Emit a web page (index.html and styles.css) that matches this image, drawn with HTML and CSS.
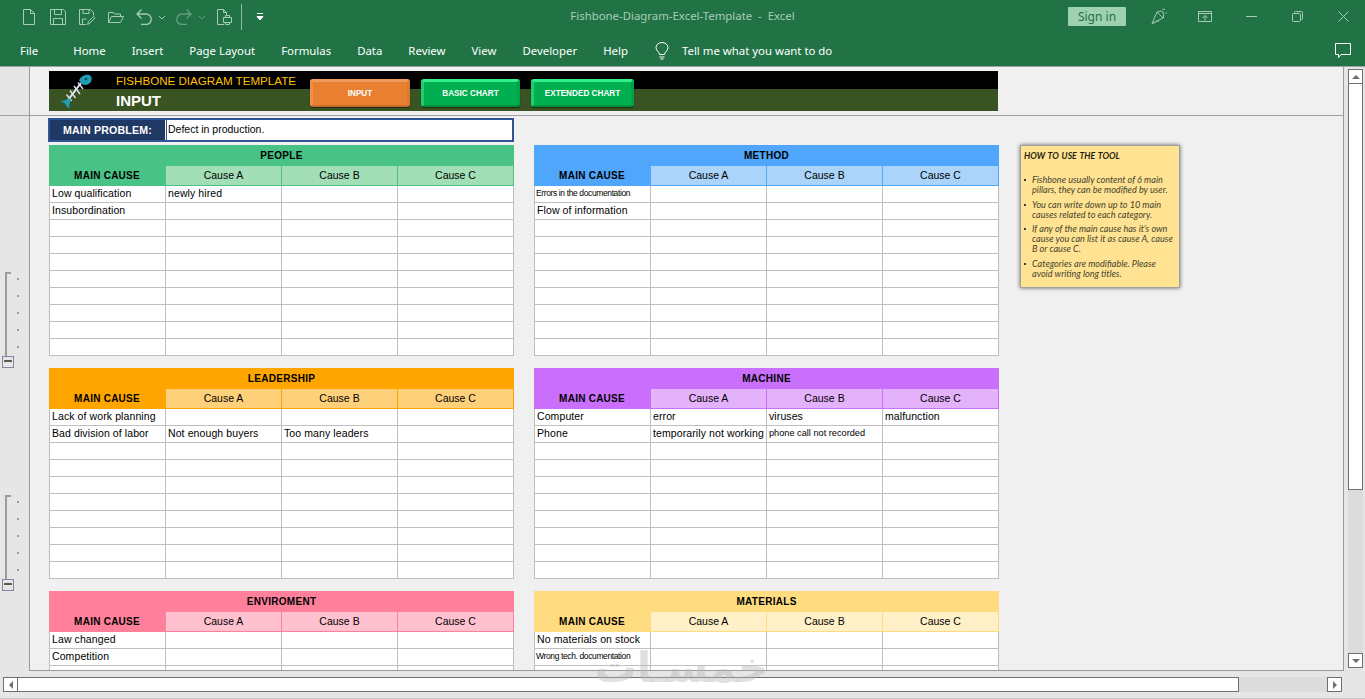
FILE: index.html
```html
<!DOCTYPE html>
<html lang="en">
<head>
<meta charset="utf-8">
<title>Fishbone-Diagram-Excel-Template - Excel</title>
<link rel="stylesheet" href="styles.css">
</head>
<body>
<div class="app">
  <header class="titlebar">
    <div class="qat">
      <svg class="qi" viewBox="0 0 16 16"><path d="M2.500.5h7l4 4v11h-11zM9.500.5v4h4"/></svg>
      <svg class="qi" viewBox="0 0 16 16"><path d="M.5.5h13l2 2v13H.5zM4.500.5v5h7v-5M3.500 15.500v-6h9v6"/></svg>
      <svg class="qi" viewBox="0 0 16 16"><path d="M7 15.500H.5V.5h11l3 3v3M4 .5v4h6v-4M3.500 15v-5h4M8.500 15.500l1-3 5-5 1.500 1.500-5 5z"/></svg>
      <svg class="qi" viewBox="0 0 16 16"><path d="M.5 13.500v-10h5l1 1.500h6v2M.5 13.500l3-6h12l-3 6z"/></svg>
      <svg class="qg" viewBox="0 0 34 16"><path d="M7.500.5 3 5l4.500 4.500M3 5h9a5.200 5.200 0 0 1 0 10.500H7"/><path class="caret" d="M25 7l3 3 3-3"/></svg>
      <svg class="qg qg-dim" viewBox="0 0 34 16"><path d="M13.500.5 18 5l-4.500 4.500M18 5H9a5.200 5.200 0 0 0 0 10.500h5"/><path class="caret" d="M26 7l3 3 3-3"/></svg>
      <svg class="qi qi-print" viewBox="0 0 16 16"><path d="M8 15.500H1.500V.5h6l3 3v3M7.500.5v3h3M7.500 8.500h8v5h-8zM9.500 8.500v-2h4v2M9.500 13v2.500h4V13"/></svg>
      <span class="qsep"></span>
      <svg class="qcust" viewBox="0 0 10 10"><path d="M2 1.500h6M2 4.500h6l-3 3.500z"/></svg>
    </div>
    <div class="doc-title">Fishbone-Diagram-Excel-Template&nbsp; - &nbsp;Excel</div>
    <div class="win">
      <button class="signin">Sign in</button>
      <span class="wb"><svg width="17" height="17" viewBox="0 0 17 17"><path d="M1 15.500 6 4l6 6zM6 4l4-1 2 1 .5 2v4M3 15.500l3-3 2 1M13 2l1-1M14.500 5H16M12 .5V2"/></svg></span>
      <span class="wb"><svg width="14" height="11" viewBox="0 0 14 11"><path d="M.5.5h13v10H.5zM.5 2.500h13M7 9.500V4.500M4.500 7 7 4.500 9.500 7"/></svg></span>
      <span class="wb"><svg width="11" height="1" viewBox="0 0 11 1"><path d="M0 .5h11"/></svg></span>
      <span class="wb"><svg width="11" height="11" viewBox="0 0 11 11"><rect x=".5" y="2.500" width="8" height="8" rx="1"/><path d="M2.500 2.500v-1a1 1 0 0 1 1-1h6a1 1 0 0 1 1 1v6a1 1 0 0 1-1 1h-1"/></svg></span>
      <span class="wb"><svg width="11" height="11" viewBox="0 0 11 11"><path d="M.5.5l10 10M10.500.5l-10 10"/></svg></span>
    </div>
  </header>

  <nav class="ribbon">
    <span class="tab tab-file">File</span>
    <span class="tab">Home</span>
    <span class="tab">Insert</span>
    <span class="tab">Page Layout</span>
    <span class="tab">Formulas</span>
    <span class="tab">Data</span>
    <span class="tab">Review</span>
    <span class="tab">View</span>
    <span class="tab">Developer</span>
    <span class="tab">Help</span>
    <svg class="bulb" width="14" height="18" viewBox="0 0 14 18"><path d="M4.500 12.500c0-2.500-3.500-3.500-3.500-7a6 5 0 0 1 12 0c0 3.500-3.500 4.500-3.500 7zM4.500 15h5M5.500 17h3"/></svg>
    <span class="tab">Tell me what you want to do</span>
    <svg class="comment" width="16" height="16" viewBox="0 0 16 16"><path d="M.5.500h15v11H6l-2.500 3v-3h-3z"/></svg>
  </nav>

  <main class="workspace">
    <aside class="gutter">
      <div class="gutter-top"></div>
      <div class="outline outline-first">
        <span class="outline-line"></span>
        <div class="outline-dots"><i></i><i></i><i></i><i></i><i></i></div>
        <span class="outline-box"></span>
      </div>
      <div class="outline outline-next">
        <span class="outline-line"></span>
        <div class="outline-dots"><i></i><i></i><i></i><i></i><i></i></div>
        <span class="outline-box"></span>
      </div>
    </aside>

    <section class="sheet">
      <div class="frozen">
        <div class="banner">
          <svg class="fish" width="34" height="36" viewBox="0 0 34 36">
            <path class="fish-bone" d="M9 26 22 9"/>
            <path class="fish-rib" d="M7.500 20.500l5 6.500M11 16.500l5.500 7.500M15 12l6 8M19 8.500l5 6.500"/>
            <path class="fish-teal" d="M20 6.500c1.500-4 6-6.500 10-5.500 3 1 3.500 5 1.500 7.500-2 2.500-6 3-8 2z"/>
            <circle class="fish-eye" cx="27" cy="5" r="1.300"/>
            <path class="fish-teal" d="M1 27c3 0 6-.5 9.500-3l1.500 2.500c-1.500 2-2 5-1.500 8.500-1.500-1-3.500-3-4.500-5.500-1.500-1-3.500-1.500-5-2.500z"/>
          </svg>
          <div class="banner-title">
            <div class="banner-name">FISHBONE DIAGRAM TEMPLATE</div>
            <div class="banner-page">INPUT</div>
          </div>
          <div class="banner-btns">
            <button class="macro macro-orange">INPUT</button>
            <button class="macro macro-green macro-basic">BASIC CHART</button>
            <button class="macro macro-green macro-ext">EXTENDED CHART</button>
          </div>
        </div>
      </div>

      <div class="pane">
        <div class="problem">
          <div class="problem-label">MAIN PROBLEM:</div>
          <div class="problem-value">Defect in production.</div>
        </div>

        <div class="tables">
          <table class="cat green">
            <colgroup><col class="c1"><col class="c2"><col class="c2"><col class="c2"></colgroup>
            <tr><th colspan="4" class="cat-title">PEOPLE</th></tr>
            <tr class="head"><th class="main">MAIN CAUSE</th><th>Cause A</th><th>Cause B</th><th>Cause C</th></tr>
            <tr><td>Low qualification</td><td>newly hired</td><td></td><td></td></tr>
            <tr><td>Insubordination</td><td></td><td></td><td></td></tr>
            <tr><td></td><td></td><td></td><td></td></tr>
            <tr><td></td><td></td><td></td><td></td></tr>
            <tr><td></td><td></td><td></td><td></td></tr>
            <tr><td></td><td></td><td></td><td></td></tr>
            <tr><td></td><td></td><td></td><td></td></tr>
            <tr><td></td><td></td><td></td><td></td></tr>
            <tr><td></td><td></td><td></td><td></td></tr>
            <tr><td></td><td></td><td></td><td></td></tr>
          </table>
          <table class="cat blue">
            <colgroup><col class="c1"><col class="c2"><col class="c2"><col class="c2"></colgroup>
            <tr><th colspan="4" class="cat-title">METHOD</th></tr>
            <tr class="head"><th class="main">MAIN CAUSE</th><th>Cause A</th><th>Cause B</th><th>Cause C</th></tr>
            <tr><td class="tiny">Errors in the documentation</td><td></td><td></td><td></td></tr>
            <tr><td>Flow of information</td><td></td><td></td><td></td></tr>
            <tr><td></td><td></td><td></td><td></td></tr>
            <tr><td></td><td></td><td></td><td></td></tr>
            <tr><td></td><td></td><td></td><td></td></tr>
            <tr><td></td><td></td><td></td><td></td></tr>
            <tr><td></td><td></td><td></td><td></td></tr>
            <tr><td></td><td></td><td></td><td></td></tr>
            <tr><td></td><td></td><td></td><td></td></tr>
            <tr><td></td><td></td><td></td><td></td></tr>
          </table>
          <table class="cat orange">
            <colgroup><col class="c1"><col class="c2"><col class="c2"><col class="c2"></colgroup>
            <tr><th colspan="4" class="cat-title">LEADERSHIP</th></tr>
            <tr class="head"><th class="main">MAIN CAUSE</th><th>Cause A</th><th>Cause B</th><th>Cause C</th></tr>
            <tr><td>Lack of work planning</td><td></td><td></td><td></td></tr>
            <tr><td>Bad division of labor</td><td>Not enough buyers</td><td>Too many leaders</td><td></td></tr>
            <tr><td></td><td></td><td></td><td></td></tr>
            <tr><td></td><td></td><td></td><td></td></tr>
            <tr><td></td><td></td><td></td><td></td></tr>
            <tr><td></td><td></td><td></td><td></td></tr>
            <tr><td></td><td></td><td></td><td></td></tr>
            <tr><td></td><td></td><td></td><td></td></tr>
            <tr><td></td><td></td><td></td><td></td></tr>
            <tr><td></td><td></td><td></td><td></td></tr>
          </table>
          <table class="cat purple">
            <colgroup><col class="c1"><col class="c2"><col class="c2"><col class="c2"></colgroup>
            <tr><th colspan="4" class="cat-title">MACHINE</th></tr>
            <tr class="head"><th class="main">MAIN CAUSE</th><th>Cause A</th><th>Cause B</th><th>Cause C</th></tr>
            <tr><td>Computer</td><td>error</td><td>viruses</td><td>malfunction</td></tr>
            <tr><td>Phone</td><td>temporarily not working</td><td class="small">phone call not recorded</td><td></td></tr>
            <tr><td></td><td></td><td></td><td></td></tr>
            <tr><td></td><td></td><td></td><td></td></tr>
            <tr><td></td><td></td><td></td><td></td></tr>
            <tr><td></td><td></td><td></td><td></td></tr>
            <tr><td></td><td></td><td></td><td></td></tr>
            <tr><td></td><td></td><td></td><td></td></tr>
            <tr><td></td><td></td><td></td><td></td></tr>
            <tr><td></td><td></td><td></td><td></td></tr>
          </table>
          <table class="cat pink">
            <colgroup><col class="c1"><col class="c2"><col class="c2"><col class="c2"></colgroup>
            <tr><th colspan="4" class="cat-title">ENVIROMENT</th></tr>
            <tr class="head"><th class="main">MAIN CAUSE</th><th>Cause A</th><th>Cause B</th><th>Cause C</th></tr>
            <tr><td>Law changed</td><td></td><td></td><td></td></tr>
            <tr><td>Competition</td><td></td><td></td><td></td></tr>
            <tr><td></td><td></td><td></td><td></td></tr>
            <tr><td></td><td></td><td></td><td></td></tr>
          </table>
          <table class="cat yellow">
            <colgroup><col class="c1"><col class="c2"><col class="c2"><col class="c2"></colgroup>
            <tr><th colspan="4" class="cat-title">MATERIALS</th></tr>
            <tr class="head"><th class="main">MAIN CAUSE</th><th>Cause A</th><th>Cause B</th><th>Cause C</th></tr>
            <tr><td>No materials on stock</td><td></td><td></td><td></td></tr>
            <tr><td class="tiny">Wrong tech. documentation</td><td></td><td></td><td></td></tr>
            <tr><td></td><td></td><td></td><td></td></tr>
            <tr><td></td><td></td><td></td><td></td></tr>
          </table>
        </div>

        <div class="note">
          <p class="note-head">HOW TO USE THE TOOL</p>
          <ul>
            <li>Fishbone usually content of 6 main pillars, they can be modified by user.</li>
            <li>You can write down up to 10 main causes related to each category.</li>
            <li>If any of the main cause has it's own cause you can list it as cause A, cause B or cause C.</li>
            <li>Categories are modifiable. Please avoid writing long titles.</li>
          </ul>
        </div>
      </div>
    </section>

    <aside class="vscroll">
      <span class="sbtn"><span class="arrow arrow-up"></span></span>
      <span class="vthumb"></span>
      <span class="vtrack"></span>
      <span class="sbtn"><span class="arrow arrow-down"></span></span>
    </aside>
  </main>

  <footer class="bottom">
    <span class="sbtn"><span class="arrow arrow-left"></span></span>
    <span class="hthumb"></span>
    <span class="htrack"></span>
    <span class="sbtn"><span class="arrow arrow-right"></span></span>
  </footer>

  <div class="watermark" dir="rtl" lang="ar">خمسـات</div>
</div>
</body>
</html>
```

FILE: styles.css
```css
* { box-sizing: border-box; }
html, body { margin: 0; padding: 0; }
body { font-family: "Liberation Sans", Arial, sans-serif; background: #e6e6e6; }

.app {
  position: relative;
  width: 1365px;
  height: 699px;
  overflow: hidden;
  display: flex;
  flex-direction: column;
}

/* Title bar */
.titlebar {
  height: 33px;
  background: #217346;
  display: grid;
  grid-template-columns: 1fr auto 1fr;
  align-items: center;
  font-family: "Noto Sans", sans-serif;
}
.qat { display: flex; align-items: center; padding-left: 21px; height: 33px; }
.qat svg { fill: none; stroke: #a6cbb6; stroke-width: 1; }
.qi { width: 16px; height: 16px; margin-right: 13px; flex: none; }
.qi:nth-child(4) { margin-right: 10px; }
.qg { width: 34px; height: 16px; margin-right: 5px; flex: none; }
.qat .qg { stroke-width: 1.300; }
.qat .qg .caret { stroke-width: 1; }
.qg-dim { margin-right: 9px; opacity: .5; }
.qi-print { margin-right: 9px; }
.qsep { width: 1px; height: 26px; background: #8fbda3; margin-right: 13px; flex: none; }
.qat .qcust { width: 10px; height: 10px; stroke: #fff; fill: #fff; flex: none; }
.doc-title { font-size: 11.400px; color: #a8cdb8; white-space: nowrap; padding-bottom: 2px; }
.win { display: flex; align-items: center; justify-content: flex-end; margin-right: -1px; }
.signin {
  width: 58px;
  height: 19px;
  margin-right: 10px;
  padding: 0;
  border: 0;
  border-radius: 1px;
  background: #9fd0b0;
  color: #217346;
  font: 12px "Noto Sans", sans-serif;
}
.wb { width: 46px; height: 33px; display: flex; align-items: center; justify-content: center; }
.wb svg { fill: none; stroke: #a6cbb6; stroke-width: 1; }

/* Ribbon tabs */
.ribbon {
  height: 33px;
  background: #217346;
  display: flex;
  align-items: center;
  gap: 26px;
  padding: 2px 0 0 20px;
  font: 11.400px "Noto Sans", sans-serif;
  color: #fff;
}
.tab { white-space: nowrap; }
.tab-file { margin-right: 9px; }
.ribbon svg { fill: none; stroke: #fff; stroke-width: 1; flex: none; }
.bulb { margin: 0 -13px 0 1px; }
.comment { margin-left: auto; margin-right: 14px; }

/* Workspace */
.workspace {
  height: 605px;
  display: flex;
  border-top: 1px solid #a0a0a0;
}
.gutter {
  width: 30px;
  flex: none;
  background: #e6e6e6;
  border-right: 1px solid #9a9a9a;
}
.gutter-top { height: 49px; border-bottom: 1px solid #a0a0a0; margin-right: -1px; }
.outline { position: relative; height: 96px; }
.outline-first { margin-top: 156px; }
.outline-next { margin-top: 127px; }
.outline-line {
  position: absolute;
  left: 5px;
  top: 0;
  width: 6px;
  height: 85px;
  border-left: 2px solid #9c9c9c;
  border-top: 2px solid #9c9c9c;
}
.outline-dots { display: flex; flex-direction: column; gap: 15px; padding: 6px 0 0 17px; }
.outline-dots i { display: block; width: 2px; height: 2px; background: #9c9c9c; }
.outline-box {
  position: absolute;
  left: 2px;
  top: 84px;
  width: 12px;
  height: 12px;
  border: 1px solid #8a80a0;
  background: linear-gradient(#e6e6e6 3px, #5d5d4c 3px, #5d5d4c 5px, #e6e6e6 5px) center / 8px 100% no-repeat #e6e6e6;
}

.sheet {
  width: 1314px;
  flex: none;
  background: #f0f0f0;
  border-right: 1px solid #9a9a9a;
  border-bottom: 1px solid #9a9a9a;
  overflow: hidden;
  display: flex;
  flex-direction: column;
}
.frozen {
  height: 49px;
  flex: none;
  padding: 4px 0 0 19px;
  border-bottom: 1px solid #a0a0a0;
}
.banner {
  width: 949px;
  height: 40px;
  display: flex;
  background: linear-gradient(#000 18px, #3a5322 18px);
}
.fish { margin: 3px 0 0 10px; flex: none; }
.fish-teal { fill: #1f9db2; }
.fish-eye { fill: #0b4b57; }
.fish-bone { fill: none; stroke: #e4e4f8; stroke-width: 2; }
.fish-rib { fill: none; stroke: #e4e4f8; stroke-width: 1.300; }
.banner-title { width: 194px; margin-left: 23px; flex: none; }
.banner-name { font-size: 11.600px; line-height: 13px; margin-top: 3px; color: #ffc000; white-space: nowrap; }
.banner-page { font-size: 15px; line-height: 17px; margin-top: 5px; font-weight: 700; color: #fff; }
.banner-btns { display: flex; gap: 11px; padding-top: 8px; }
.macro {
  width: 100px;
  height: 28px;
  padding: 0;
  border-style: solid;
  border-width: 3px 3px 2px;
  border-radius: 3px;
  color: #fff;
  font: 700 8.200px "Liberation Sans", sans-serif;
  box-shadow: 0 1px 1px rgba(0, 0, 0, .5);
}
.macro-orange { background: #e97f30; border-color: #f29a5c #d97a33 #c96d2b #f08f4c; }
.macro-green { background: #00b050; border-color: #33ef8a #00a148 #00913f #1ad070; }
.macro-basic { width: 99px; }
.macro-ext { width: 103px; }

.pane { position: relative; flex: 1; padding: 2px 0 0 19px; }
.problem {
  display: flex;
  width: 466px;
  height: 24px;
  margin: 0 0 3px -1px;
  border: 2px solid #2f5597;
}
.problem-label {
  width: 115px;
  flex: none;
  margin-right: 1px;
  background: #1f3864;
  color: #fff;
  font-size: 10.600px;
  letter-spacing: .2px;
  font-weight: 700;
  line-height: 20px;
  text-align: center;
}
.problem-value {
  flex: 1;
  padding-left: 1px;
  background: #fff;
  border-left: 1px solid #2f5597;
  font-size: 10.500px;
  line-height: 18px;
  color: #000;
}

.tables {
  display: grid;
  grid-template-columns: 465px 465px;
  column-gap: 20px;
  row-gap: 12px;
  align-items: start;
}
.cat {
  width: 465px;
  table-layout: fixed;
  border-collapse: separate;
  border-spacing: 0;
  font-size: 10.500px;
  color: #000;
  background: #fff;
}
.c1 { width: 117px; }
.c2 { width: 116px; }
.cat-title {
  height: 21px;
  padding: 0 0 1px;
  background: var(--c);
  font-size: 10px;
  letter-spacing: .3px;
  font-weight: 700;
  text-align: center;
  vertical-align: middle;
}
.head th {
  height: 20px;
  padding: 0 0 2px;
  background: var(--l);
  border-right: 1px solid var(--c);
  border-bottom: 1px solid var(--c);
  font-weight: 400;
  text-align: center;
}
.head th.main { background: var(--c); font-weight: 700; font-size: 10px; letter-spacing: .25px; padding-bottom: 1px; }
.cat td {
  height: 17px;
  padding: 0 0 1px 2px;
  border-right: 1px solid #bfbfbf;
  border-bottom: 1px solid #bfbfbf;
  white-space: nowrap;
  overflow: hidden;
  line-height: 15px;
  letter-spacing: .1px;
}
.cat td:first-child { border-left: 1px solid #bfbfbf; padding-left: 2px; }
.cat td.tiny { font-size: 8.500px; letter-spacing: -.38px; padding-left: 1px; }
.cat td.small { font-size: 9.200px; letter-spacing: 0; }

.green { --c: #48c285; --l: #a3dfb6; }
.blue { --c: #4fa6fb; --l: #abd4fb; }
.orange { --c: #ffa500; --l: #ffd07a; }
.purple { --c: #c96ffb; --l: #e4b1fb; }
.pink { --c: #ff809a; --l: #ffc0cf; }
.yellow { --c: #ffdc7f; --l: #fff0c8; }

.note {
  position: absolute;
  left: 990px;
  top: 29px;
  width: 160px;
  height: 143px;
  padding: 5px 3px 0 3px;
  background: #ffe292;
  border: 1px solid #a0a0a0;
  box-shadow: 0 0 4px rgba(0, 0, 0, .6);
  font: italic 9.100px/10.200px Lato, sans-serif;
  color: #45452f;
}
.note-head { margin: 0 0 14px; font-size: 8.700px; word-spacing: 1px; font-weight: 700; color: #1f1f10; }
.note ul { margin: 0; padding: 0 0 0 8px; list-style: none; }
.note li { position: relative; margin-bottom: 4px; }
.note li::before {
  content: "";
  position: absolute;
  left: -8px;
  top: 4px;
  width: 2px;
  height: 2px;
  background: #3a3a2a;
}

/* Scrollbars */
.vscroll {
  flex: 1;
  display: flex;
  flex-direction: column;
  padding: 2px 2px 3px 4px;
  background: #e6e6e6;
}
.sbtn {
  width: 15px;
  height: 15px;
  flex: none;
  display: flex;
  align-items: center;
  justify-content: center;
  background: #fff;
  border: 1px solid #6f6f6f;
}
.vthumb { height: 406px; background: #fff; border: 1px solid #6f6f6f; border-top: 0; flex: none; }
.vtrack { flex: 1; background: #dcdcdc; }
.arrow { width: 0; height: 0; border-style: solid; border-color: transparent; }
.arrow-up { border-width: 0 4px 4px; border-bottom-color: #6f6f6f; }
.arrow-down { border-width: 4px 4px 0; border-top-color: #6f6f6f; }
.arrow-left { border-width: 4px 4px 4px 0; border-right-color: #6f6f6f; }
.arrow-right { border-width: 4px 0 4px 4px; border-left-color: #6f6f6f; }

.bottom {
  flex: 1;
  display: flex;
  align-items: flex-start;
  padding: 6px 23px 0 3px;
  background: #e6e6e6;
  border-bottom: 1px solid #c8c8c8;
}
.hthumb { width: 1221px; height: 15px; flex: none; background: #fff; border: 1px solid #6f6f6f; border-left: 0; }
.htrack { flex: 1; height: 15px; background: #dcdcdc; }

.watermark {
  position: absolute;
  left: 596px;
  top: 640px;
  width: 172px;
  text-align: center;
  font: 700 42px/56px "DejaVu Sans", sans-serif;
  color: rgba(185, 185, 185, .45);
  pointer-events: none;
  white-space: nowrap;
}
```
